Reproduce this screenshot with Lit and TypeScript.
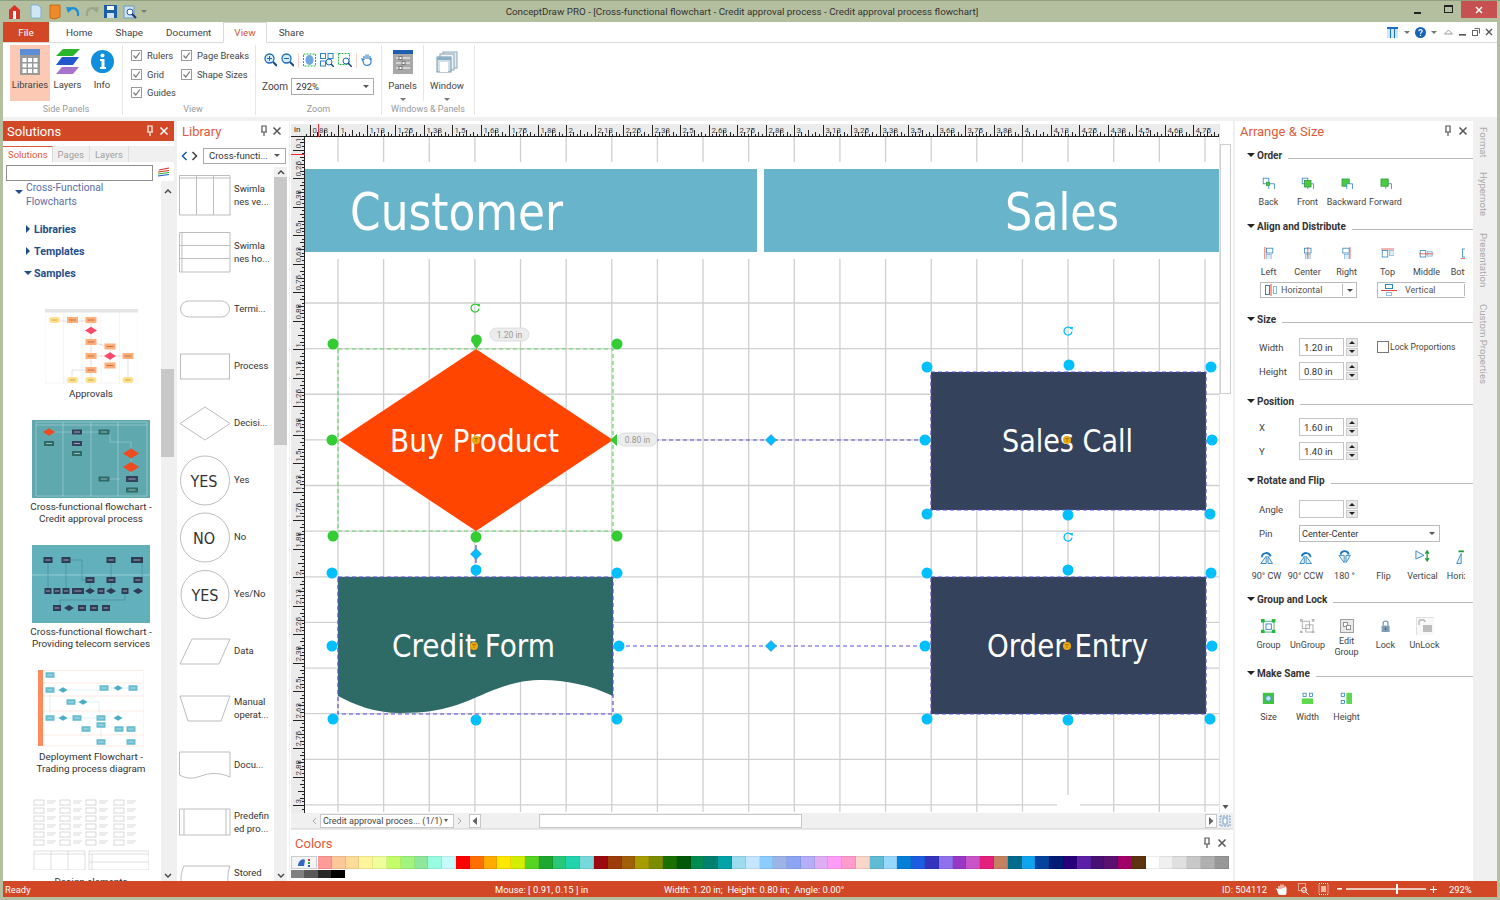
import { LitElement, html, css, svg } from 'lit';
import { customElement } from 'lit/decorators.js';

const ic = (w: number, h: number, body: unknown) =>
  html`<svg width=${w} height=${h} viewBox="0 0 ${w} ${h}">${body}</svg>`;
const gap = (n: number) => html`<span class="gap" style="width:${n}px"></span>`;

const BL = '#2f86c0';
const RD = '#e8453c';
const GR = '#4ccc3c';

const box = (x: number, y: number, w: number, h: number, fill = '#fff', stroke = BL) =>
  svg`<rect x=${x + 0.5} y=${y + 0.5} width=${w} height=${h} fill=${fill} stroke=${stroke}/>`;
const hl = (x1: number, y1: number, x2: number, y2: number, c = RD) =>
  svg`<line x1=${x1} y1=${y1} x2=${x2} y2=${y2} stroke=${c}/>`;

const ICONS: Record<string, unknown> = {
  back: svg`${box(1, 1, 7, 7)}${box(8, 8, 7, 7)}${box(5, 6, 4, 4, GR, '#2a9a40')}`,
  front: svg`${box(1, 1, 7, 7)}${box(8, 8, 7, 7)}${box(4, 4, 8, 8, GR, '#2a9a40')}`,
  backward: svg`${box(2, 2, 9, 9, GR, '#2a9a40')}${box(8, 8, 7, 7)}`,
  forward: svg`${box(8, 8, 7, 7)}${box(2, 2, 9, 9, GR, '#2a9a40')}`,
  left: svg`${box(5, 1, 8, 6)}${box(5, 9, 6, 6, '#dcecf6', '#8cbcd8')}${hl(3.5, 0, 3.5, 16)}`,
  center: svg`${box(4, 1, 8, 6)}${box(5, 9, 6, 6, '#dcecf6', '#8cbcd8')}${hl(8.5, 0, 8.5, 16)}`,
  right: svg`${box(3, 1, 8, 6)}${box(5, 9, 6, 6, '#dcecf6', '#8cbcd8')}${hl(12.5, 0, 12.5, 16)}`,
  top: svg`${box(1, 4, 7, 8)}${box(10, 4, 6, 6, '#dcecf6', '#8cbcd8')}${hl(0, 2.5, 17, 2.5)}`,
  middle: svg`${box(1, 4, 7, 8)}${box(10, 5, 6, 6, '#dcecf6', '#8cbcd8')}${hl(0, 8.5, 18, 8.5)}`,
  bot: svg`${box(4, 2, 8, 10)}${hl(2, 14.5, 14, 14.5)}`,
  cw: svg`<path d="M2 15 L8 7 L8 15 Z M10 7 L15 15 L10 15 Z" fill="#eaf4fb" stroke=${BL}/><path d="M3 8 C4 2 11 2 13 7" fill="none" stroke="#1878c8" stroke-width="2"/>`,
  ccw: svg`<path d="M2 15 L7 7 L7 15 Z M9 7 L15 15 L9 15 Z" fill="#eaf4fb" stroke=${BL}/><path d="M14 8 C13 2 6 2 4 7" fill="none" stroke="#1878c8" stroke-width="2"/>`,
  r180: svg`<path d="M2 6 L8 14 L8 6 Z M10 14 L15 6 L10 6 Z" fill="#eaf4fb" stroke=${BL}/><path d="M4 5 C5 0 12 0 13 5" fill="none" stroke="#1878c8" stroke-width="2"/>`,
  vert: svg`<path d="M1 1 L10 6 L1 10 Z" fill="#eaf4fb" stroke=${BL}/><path d="M13.5 2 V11 M11.5 4 L13.5 1 L15.5 4 M11.5 9 L13.5 12 L15.5 9" fill="none" stroke="#1f9a3a" stroke-width="1.4"/>`,
  horiz: svg`<path d="M8 4 L3 15 L8 15 Z" fill="#eaf4fb" stroke=${BL}/><path d="M5 1.5 H11" stroke="#1f9a3a" stroke-width="2"/>`,
  group: svg`${box(2, 2, 12, 12, 'none', '#4aa07a')}${box(5, 5, 6, 6)}<path d="M0 0h4v4h-4z M12 0h4v4h-4z M0 12h4v4h-4z M12 12h4v4h-4z" fill="#22b83c"/>`,
  ungroup: svg`${box(2, 2, 8, 8, 'none', '#a8a8a8')}${box(6, 6, 8, 8, 'none', '#a8a8a8')}<path d="M0 0h3v3h-3z M13 0h3v3h-3z M0 13h3v3h-3z M13 13h3v3h-3z" fill="#b8b8b8"/>`,
  editgroup: svg`${box(0, 0, 13, 13, '#e8e8e8', '#a0a0a0')}${box(3, 3, 4, 4, '#fff', '#909090')}${box(6, 6, 4, 4, '#fff', '#909090')}`,
  lock: svg`<path d="M4 7 V4 C4 0.5 10 0.5 10 4 V7" fill="none" stroke="#7c9cb0" stroke-width="1.6"/><rect x="2" y="7" width="10" height="8" fill="#7d9db4"/><rect x="6.3" y="9.5" width="1.4" height="3" fill="#3d5a70"/>`,
  unlock: svg`${box(0, 0, 18, 18, '#f8f8f8', '#e0e0e0')}<path d="M3 8 V5 C3 2 9 2 9 5" fill="none" stroke="#bbb" stroke-width="1.4"/><rect x="7" y="8" width="9" height="7" fill="#bdbdbd"/>`,
  msize: svg`<rect x="1" y="1" width="14" height="14" fill="#3ec43e"/><circle cx="8" cy="8" r="3.5" fill="#b8e4f8" stroke="#2f86c0"/>`,
  mwidth: svg`<rect x="1" y="8" width="14" height="7" fill="#5ed84e"/>${box(2, 1, 4, 4, '#fff')}${box(10, 1, 4, 4, '#fff')}`,
  mheight: svg`<rect x="8" y="1" width="7" height="14" fill="#5ed84e"/>${box(1, 1, 4, 4, '#fff')}${box(1, 10, 4, 4, '#fff')}`
};

const tool = (name: string, label: string, w = 16, h = 16, scale = 0.8, cls = '') =>
  html`<div class="tool ${cls}">
    <div class="tool-ic">
      ${name ? html`<svg width=${w * scale} height=${h * scale} viewBox="0 0 ${w} ${h}">${ICONS[name]}</svg>` : ''}
    </div>
    <div class="tool-lb">${label}</div>
  </div>`;

const tri = html`<span class="tri"></span>`;

const pin = (c: string) =>
  ic(12, 12, svg`<path d="M4 1 H8 V7 H4 Z M3 7 H9 M6 7 V11" fill="none" stroke=${c} stroke-width="1.2"/>`);
const close = (c: string) =>
  ic(12, 12, svg`<path d="M2.5 2.5 L9.5 9.5 M9.5 2.5 L2.5 9.5" stroke=${c} stroke-width="1.5"/>`);

const spin = html`<div class="spin"><span class="up"></span><span class="dn"></span></div>`;
const numRow = (label: string, val: string) =>
  html`<div class="num"><label>${label}</label><div class="inp">${val}</div>${spin}</div>`;

const sb = (top: number, len: number) =>
  html`<div class="sbar">
    ${ic(12, 10, svg`<path d="M3 7 L6 4 L9 7" fill="none" stroke="#444" stroke-width="1.4"/>`)}
    <div class="track"><div class="thumb" style="margin-top:${top}px;height:${len}px"></div></div>
    ${ic(12, 10, svg`<path d="M3 3 L6 6 L9 3" fill="none" stroke="#444" stroke-width="1.4"/>`)}
  </div>`;

// sample thumbnails use page coordinates through their viewBox
const bx = (x: number, y: number, w: number, h: number, f: string, t = 'rgba(255,255,255,.75)') =>
  svg`<rect x=${x - w / 2} y=${y - h / 2} width=${w} height=${h} fill=${f}/>
  <path d="M${x - w * 0.3} ${y} H${x + w * 0.3}" stroke=${t} stroke-width="0.7"/>`;
const dm = (x: number, y: number, r: number, f: string) =>
  svg`<path d="M${x - r} ${y} L${x} ${y - r * 0.62} L${x + r} ${y} L${x} ${y + r * 0.62} Z" fill=${f}/>`;
const ol = (x: number, y: number, w: number, h: number, f: string) =>
  svg`<rect x=${x - w / 2} y=${y - h / 2} width=${w} height=${h} rx=${h / 2} fill=${f}/>
  <path d="M${x - w * 0.25} ${y} H${x + w * 0.25}" stroke="#a08030" stroke-width="0.6"/>`;
const ln = (d: string, c: string) => svg`<path d=${d} fill="none" stroke=${c} stroke-width="0.5"/>`;
const ORT = '#a05a30';

const approvals = svg`
  <rect x="45" y="309" width="93" height="3.5" fill="#e4e4e4"/>
  ${[45, 63.5, 82, 101, 119.5, 138].map((x) => ln(`M${x} 309 V383`, '#e8e8e8'))}
  ${ln('M45 383 H138', '#e8e8e8')}
  ${ln('M57 321 H91 V380 M91 342 L110 347 M110 350 V365 M91 356 H128 V380 M91 370 H72 V380', '#c0c0c0')}
  ${ol(54.5, 320, 11, 6, '#ffe08c')}${bx(72.5, 320, 11, 6, '#ffae78', ORT)}${bx(91, 320, 11, 6, '#ffae78', ORT)}
  ${dm(91, 330.5, 6, '#fa4a6c')}${bx(91, 342, 11, 6, '#ffae78', ORT)}${bx(110, 346.5, 11, 6, '#ffae78', ORT)}
  ${bx(91, 356, 11, 6, '#ffae78', ORT)}${dm(110, 356, 6, '#fa4a6c')}${bx(110, 365.5, 11, 6, '#ffae78', ORT)}
  ${bx(128, 356, 11, 6, '#ffae78', ORT)}${bx(91, 370, 11, 6, '#ffae78', ORT)}
  ${ol(72.5, 380, 11, 6, '#ffe08c')}${ol(91, 380, 11, 6, '#ffe08c')}${ol(128, 380, 11, 6, '#ffe08c')}
`;

const credit = svg`
  <rect x="32" y="420" width="118" height="78" fill="#5fa8ae"/>
  ${ln('M36 422 H147 V496 H36 Z M36 425 H147 M63 422 V496 M91 422 V496 M118 422 V496', '#bfe0e0')}
  ${ln('M55 432 H72 M82 432 H100 M110 432 V442 H131 V448 M131 458 V474 M120 479 H110', '#a8d4d6')}
  ${dm(49, 432, 6, '#f04a20')}${bx(49, 443.5, 10, 5, '#2e6b66')}
  ${bx(77, 432, 10, 5, '#34425c')}${bx(77, 443.5, 10, 5, '#34425c')}${bx(77, 453.5, 10, 5, '#2e6b66')}
  ${bx(104, 432, 11, 5, '#2e6b66')}${dm(131, 453.5, 8, '#f04a20')}${dm(131, 467, 8, '#f04a20')}
  ${bx(104, 479, 11, 5, '#2e6b66')}${bx(132, 479, 12, 6, '#34425c')}${bx(132, 490, 12, 5, '#2e6b66')}
`;

const telecom = svg`
  <rect x="32" y="545" width="118" height="78" fill="#62b0bb"/>
  ${ln('M32 575 H150', '#c8e8ec')}
  ${ln('M48 563 V591 M66 563 V591 M71 560 H82 V580 H90 M111 563 V591 M142 562 V580 M90 582 V591 M125 591 V600 H60 V608', '#3d7f90')}
  ${[48, 66, 111, 137].map((x) => bx(x, 560, x === 137 ? 12 : 9, 6, '#2f3c56'))}
  ${[90, 111, 138].map((x) => bx(x, 580, 9, 6, '#2f3c56'))}
  ${[48, 57, 66, 78, 101, 125].map((x) => bx(x, 591, x === 78 ? 12 : 7, 6, '#2f3c56'))}
  ${[90, 111, 138].map((x) => dm(x, 591, 5, '#2f3c56'))}
  ${[57, 82, 94, 106].map((x) => bx(x, 608, 8, 6, '#2f3c56'))}${dm(69, 608, 5, '#2f3c56')}
`;

const deployment = svg`
  <rect x="38" y="669" width="106" height="78" fill="#fff"/>
  <rect x="38" y="669" width="5" height="76" fill="#ff8a5c"/>
  ${ln('M43 669.5 H144 V745 H43 M43 682 H144 M43 695 H144 M43 710 H144 M43 734 H144', '#fbd4c4')}
  ${ln('M55 689 H99 M108 687 H128 M50 693 V714 M55 717 H97 M75 701 H99 V712 M101 727 V738', '#bfe0ea')}
  ${[[50, 674], [50, 689], [104, 687], [133, 687], [71, 701], [50, 717], [77, 717], [101, 717], [101, 724], [86, 728], [119, 728], [131, 728], [101, 741], [131, 741]].map(
    ([x, y]) => bx(x, y, 9, 5.5, '#66bcd0')
  )}
  ${[[63, 689], [118, 687], [83, 701], [63, 717], [118, 717]].map(([x, y]) => dm(x, y, 4.5, '#4caec4'))}
`;

const designEls = svg`
  ${[800, 808, 816, 824, 832, 840].map((y) =>
    [34, 60, 86, 114].map(
      (x) => svg`<rect x=${x} y=${y - 2} width="10" height="5" fill="none" stroke="#bdbdbd" stroke-width="0.6"/>
      ${ln(`M${x + 13} ${y - 1} H${x + 22} M${x + 13} ${y + 1} H${x + 20}`, '#b0b0b0')}`
    )
  )}
  ${ln('M34 849 H85 V868 H34 Z M34 852 H85 M51 849 V868 M68 849 V868', '#bdbdbd')}
  ${ln('M89 849 H149 V868 H89 Z M89 852 H149 M92 852 V868 M89 860 H149', '#bdbdbd')}
`;

const samples = [
  { vb: '45 309 93 75', w: 93, h: 75, body: approvals, label: ['Approvals'] },
  { vb: '32 420 118 78', w: 118, h: 78, body: credit, label: ['Cross-functional flowchart -', 'Credit approval process'] },
  { vb: '32 545 118 78', w: 118, h: 78, body: telecom, label: ['Cross-functional flowchart -', 'Providing telecom services'] },
  { vb: '38 669 106 78', w: 106, h: 78, body: deployment, label: ['Deployment Flowchart -', 'Trading process diagram'] },
  { vb: '33 797 116 71', w: 116, h: 71, body: designEls, label: ['Design elements'] }
];

const libShape = (d: string) => svg`<path d=${d} fill="#fff" stroke="#bdbdbd" stroke-width="1"/>`;
const lib: { lb: string[]; s: unknown }[] = [
  { lb: ['Swimla', 'nes ve...'], s: svg`${libShape('M0.5 5.5 H51 V45 H0.5 Z M0.5 8 H51 M17.5 5.5 V45 M34.5 5.5 V45')}` },
  { lb: ['Swimla', 'nes ho...'], s: svg`${libShape('M0.5 5.5 H51 V45 H0.5 Z M3 5.5 V45 M0.5 18.5 H51 M0.5 31.5 H51')}` },
  { lb: ['Termi...'], s: svg`<rect x="1.5" y="17" width="49" height="16" rx="8" fill="#fff" stroke="#bdbdbd"/>` },
  { lb: ['Process'], s: svg`<rect x="1.5" y="13" width="49" height="25" fill="#fff" stroke="#bdbdbd"/>` },
  { lb: ['Decisi...'], s: libShape('M1 25.5 L26 9 L51 25.5 L26 42 Z') },
  { lb: ['Yes'], s: svg`<circle cx="26" cy="25.5" r="24.5" fill="#fff" stroke="#bdbdbd"/><text x="25" y="32" class="ct">YES</text>` },
  { lb: ['No'], s: svg`<circle cx="26" cy="25.5" r="24.5" fill="#fff" stroke="#bdbdbd"/><text x="25" y="32" class="ct">NO</text>` },
  { lb: ['Yes/No'], s: svg`<circle cx="26" cy="25.5" r="24" fill="#fff" stroke="#bdbdbd"/><text x="26" y="32" class="ct">YES</text>` },
  { lb: ['Data'], s: libShape('M1 38 L13 13 H51 L40 38 Z') },
  { lb: ['Manual', 'operat...'], s: libShape('M1 13 H51 L42 38 H9 Z') },
  { lb: ['Docu...'], s: libShape('M0.5 12 H51 V37 C40 32 30 33 22 36 C14 39 8 39 0.5 35 Z') },
  { lb: ['Predefin', 'ed pro...'], s: libShape('M0.5 12 H51 V38 H0.5 Z M5 12 V38 M47 12 V38') },
  { lb: ['Stored'], s: libShape('M5 12 H51 C48 20 48 30 51 38 H5 C1 30 1 20 5 12 Z') }
];

const colors = ['#fe9a9a', '#fdc79a', '#fddc9a', '#fef59a', '#eefe9a', '#c3fd6a', '#a0f57e', '#8ee89c', '#98fce0', '#c7fbfb', '#ff0000', '#ff7000', '#ffab00', '#ffe800', '#d4ee00', '#55d420', '#1ea830', '#28c878', '#22d4ac', '#78d8dc', '#9c0a10', '#9c3c08', '#a06008', '#a89c00', '#7c8c00', '#1a7000', '#005808', '#008c50', '#00806e', '#00a4a8', '#9cdcee', '#c4e6fe', '#8cccfe', '#9cb4e8', '#8ca4f4', '#b4aef8', '#e0acf4', '#ff9cf8', '#ff9ccc', '#fad6c8', '#60bcd4', '#96d8fe', '#0480d8', '#1c5ce0', '#3434bc', '#9070ec', '#9838c4', '#c854c8', '#e4207c', '#c48060', '#006c8c', '#10a4f0', '#0444a0', '#001c74', '#28007c', '#5c20a8', '#481074', '#5c1070', '#a00068', '#5c3410', '#ffffff', '#f0f0f0', '#e0e0e0', '#c8c8c8', '#b0b0b0', '#989898'];

const fmt = (v: number) => String(Math.round(v * 100) / 100);

function topRuler() {
  const out: unknown[] = [];
  for (let i = -9; i * 3.5625 + 338 < 1219; i++) {
    const x = Math.round(338 + i * 3.5625) + 0.5;
    const h = i % 8 === 0 ? 12 : i % 4 === 0 ? 7 : i % 2 === 0 ? 5 : 3;
    out.push(svg`<line x1=${x} x2=${x} y1=${137} y2=${137 - h} stroke="#222"/>`);
    if (i % 8 === 0) out.push(svg`<text x=${x + 2} y="132.5" class="rt">${fmt(1 + i / 64)}</text>`);
  }
  return out;
}
function leftRuler() {
  const out: unknown[] = [];
  for (let i = 5; i * 3.5625 + 121 < 812; i++) {
    const y = Math.round(121 + i * 3.5625) + 0.5;
    const h = i % 8 === 0 ? 12 : i % 4 === 0 ? 7 : i % 2 === 0 ? 5 : 3;
    out.push(svg`<line y1=${y} y2=${y} x1=${305} x2=${305 - h} stroke="#222"/>`);
    if (i % 8 === 0) out.push(svg`<text transform="translate(300.5 ${y - 2}) rotate(-90)" class="rt">${fmt(i / 64)}</text>`);
  }
  return out;
}

const dot = (x: number, y: number, f: string) => svg`<circle cx=${x} cy=${y} r="5.5" fill=${f}/>`;
const conn = (x: number, y: number) =>
  svg`<path d="M${x} ${y - 5.5} L${x + 5.5} ${y} L${x} ${y + 5.5} L${x - 5.5} ${y} Z" fill="#00bfff" stroke="#4a6ab0" stroke-width="0.5"/>`;
const tmark = (x: number, y: number) =>
  svg`<circle cx=${x} cy=${y} r="4" fill="#eaa80c"/><path d="M${x - 1.8} ${y - 1.5} H${x + 1.8} M${x} ${y - 1.5} V${y + 2}" stroke="#a87000" stroke-width="0.8"/>`;
const rot = (x: number, y: number, c: string) =>
  svg`<path d="M${x + 3.2} ${y - 2.4} A4 4 0 1 0 ${x + 4} ${y + 0.5}" fill="none" stroke=${c} stroke-width="1.3"/><path d="M${x + 1.6} ${y - 4} L${x + 5} ${y - 4} L${x + 4.4} ${y - 0.8} Z" fill=${c}/>`;
const cy = '#00bfff';
const gn = '#33cc33';

function diagram() {
  const vs: number[] = [];
  for (let k = 0; k < 20; k++) vs.push(338 + k * 45.63);
  const hs: number[] = [];
  for (let k = -1; k < 12; k++) hs.push(303 + k * 45.63);
  return svg`
    <g stroke="#d0d0d0" stroke-width="1.3">
      ${vs.map((x) => svg`<line x1=${x} x2=${x} y1="137" y2="812"/>`)}
      ${hs.map((y) => svg`<line x1="305" x2="1219" y1=${y} y2=${y}/>`)}
    </g>
    <rect x="305" y="162" width="914" height="97" fill="#fff"/>
    <rect x="1057" y="795" width="23" height="17" fill="#fff"/>
    <rect x="305" y="169" width="452" height="83" fill="#68b5cb"/>
    <rect x="764" y="169" width="455" height="83" fill="#68b5cb"/>
    <text x="350" y="230" class="big" textLength="213" lengthAdjust="spacingAndGlyphs">Customer</text>
    <text x="1005" y="230" class="big" textLength="114" lengthAdjust="spacingAndGlyphs">Sales</text>

    <path d="M476 349 L613 440 L476 531 L339 440 Z" fill="#ff4500"/>
    <text x="390" y="452" class="mid" textLength="169" lengthAdjust="spacingAndGlyphs">Buy Product</text>
    <path d="M338 577 H613 V696 C590 685 565 680 543 680 C510 680 490 692 465 702 C445 710 425 713 400 713 C375 713 355 705 338 696 Z" fill="#2e6b66"/>
    <text x="392" y="657" class="mid" textLength="163" lengthAdjust="spacingAndGlyphs">Credit Form</text>
    <rect x="931" y="372" width="275" height="138" fill="#34425c"/>
    <text x="1002" y="452" class="mid" textLength="131" lengthAdjust="spacingAndGlyphs">Sales Call</text>
    <rect x="931" y="577" width="275" height="137" fill="#34425c"/>
    <text x="987" y="657" class="mid" textLength="161" lengthAdjust="spacingAndGlyphs">Order Entry</text>

    <rect x="338" y="349" width="275" height="182" fill="none" stroke="#66d966" stroke-width="1.2" stroke-dasharray="4 3"/>
    <g fill="none" stroke="#5a50d8" stroke-width="1.2" stroke-dasharray="4 3">
      <rect x="338" y="577" width="275" height="137"/>
      <rect x="931" y="372" width="275" height="138"/>
      <rect x="931" y="577" width="275" height="137"/>
      <path d="M476 531 V577 M613 440 H925 M619 646 H925"/>
    </g>
    ${[[333, 344], [617, 344], [332, 440], [333, 536], [476, 537], [617, 536]].map(([x, y]) => dot(x, y, gn))}
    <path d="M471 341 A5.5 5.5 0 1 1 481.5 342 L476.5 349 Z" fill=${gn}/>
    <path d="M610 440 L617 434 V446 Z" fill=${gn}/>
    ${rot(475, 308, gn)}
    ${[[332, 573], [476, 570], [617, 573], [332, 646], [619, 646], [333, 719], [476, 720], [617, 719]].map(([x, y]) => dot(x, y, cy))}
    ${[[927, 367], [1069, 365], [1211, 367], [925, 440], [1212, 440], [927, 514], [1068, 515], [1210, 514]].map(([x, y]) => dot(x, y, cy))}
    ${[[927, 573], [1068, 570], [1211, 573], [925, 646], [1212, 646], [927, 719], [1068, 720], [1210, 719]].map(([x, y]) => dot(x, y, cy))}
    ${conn(476, 554)}${conn(771, 440)}${conn(771, 646)}
    ${rot(1068, 331, cy)}${rot(1068, 537, cy)}
    ${tmark(476, 440)}${tmark(1067, 440)}${tmark(474, 646)}${tmark(1067, 646)}
    <rect x="490" y="328" width="39" height="13" rx="6.5" fill="#ececec" stroke="#dedede"/>
    <text x="509.5" y="337.5" class="pill">1.20 in</text>
    <rect x="618" y="433" width="39" height="13" rx="6.5" fill="#ececec" stroke="#dedede"/>
    <text x="637.5" y="442.5" class="pill">0.80 in</text>
  `;
}

@customElement('app-root')
export class AppRoot extends LitElement {
  static styles = css`
    :host {
      display: block;
      width: 1500px;
      height: 900px;
      overflow: hidden;
      background: #b3bf9f;
      font-family: Roboto, 'Liberation Sans', sans-serif;
      font-size: 9.5px;
      color: #444;
    }
    svg { display: block; flex: none; }
    .gap { flex: none; }

    /* title bar */
    .titlebar {
      height: 22px;
      box-sizing: border-box;
      border-top: 1px solid #8f9f80;
      display: flex;
      align-items: center;
    }
    .qat { display: flex; align-items: center; padding-left: 8px; width: 500px; box-sizing: border-box; }
    .title { width: 484px; text-align: center; color: #333; white-space: nowrap; font-size: 9.8px; }
    .winctl { margin-left: auto; display: flex; align-items: center; gap: 8px; height: 17px; margin-top: -4px; margin-right: 3px; }
    .winx { width: 36px; height: 17px; background: #c75050; display: flex; align-items: center; justify-content: center; }
    .caret-lt { border-top-color: #f4f4f4; }

    .app { margin: 0 3px; width: 1494px; height: 859px; background: #fff; display: flex; flex-direction: column; }

    /* ribbon */
    .tabs { height: 21px; display: flex; align-items: stretch; border-bottom: 1px solid #d9d9d9; box-sizing: border-box; font-size: 9.9px; }
    .file { width: 46px; background: #d24726; color: #fff; display: flex; align-items: center; justify-content: center; margin-right: 5.5px; }
    .tab { padding: 0 11.5px; display: flex; align-items: center; color: #444; }
    .tab.on { color: #d9553a; border: 1px solid #d9d9d9; border-bottom: 1px solid #fff; height: 21px; box-sizing: border-box; padding: 0 10.5px; }
    .tabs-r { margin-left: auto; display: flex; align-items: center; padding-right: 4px; }
    .caret { width: 0; height: 0; flex: none; border-left: 3px solid transparent; border-right: 3px solid transparent; border-top: 3px solid #777; }

    .ribbon { height: 74px; display: flex; padding-top: 2px; box-sizing: border-box; border-bottom: 1px solid #fff; }
    .grp { display: flex; flex-direction: column; border-right: 1px solid #e6e6e6; box-sizing: border-box; height: 70px; }
    .grp-body { height: 57px; display: flex; }
    .grp-lb { text-align: center; color: #999; font-size: 9px; line-height: 12px; margin-top: 1px; }
    .g-side { width: 120px; padding-left: 7px; }
    .g-view { width: 133px; padding-left: 8px; }
    .g-zoom { width: 126px; }
    .g-win { width: 93px; }
    .rbtn { display: flex; flex-direction: column; align-items: center; height: 56px; box-sizing: border-box; padding-top: 3px; }
    .rbtn.on { background: #fcc9b4; }
    .rbtn span { margin-top: 4px; }
    .w40 { width: 40px; }
    .w35 { width: 35px; }
    .w34 { width: 34px; }
    .w41 { width: 41px; }
    .w46 { width: 46px; }
    .checks { display: grid; grid-template-columns: 50px 70px; grid-auto-rows: 18.5px; padding-top: 1.5px; }
    .chk { display: flex; align-items: center; gap: 5px; white-space: nowrap; font-size: 9.4px; }
    .cb { width: 9px; height: 9px; border: 1px solid #9a9a9a; flex: none; }
    .zoom-col { display: flex; flex-direction: column; padding-left: 8px; width: 100%; }
    .zoom-ic { display: flex; align-items: center; height: 30px; gap: 4px; }
    .zoom-sep { width: 1px; height: 15px; background: #f4d6d0; flex: none; }
    .zoom-row { display: flex; align-items: center; gap: 3px; margin: 3px 0 0 -2px; }
    .zoom-lb { font-size: 10px; }
    .select { border: 1px solid #ababab; box-sizing: border-box; height: 17px; display: flex; align-items: center; padding: 0 4px; color: #333; }
    .select .caret { margin-left: auto; border-top-color: #555; }
    .zoom-sel { width: 83px; }
    .win-btn { display: flex; flex-direction: column; align-items: center; height: 56px; box-sizing: border-box; padding-top: 5px; }
    .win-btn.tall { padding-top: 6px; }
    .win-btn span { margin-top: 6px; }
    .win-btn.tall span { margin-top: 7px; }
    .win-btn .caret { margin-top: 7px; }
    .sep { width: 1px; height: 56px; background: #e6e6e6; }

    /* body */
    .body { flex: 1; min-height: 0; display: flex; background: #f0f0f0; padding-top: 4px; }
    .title-o { color: #e0583a; font-size: 13px; }
    .hdr { height: 20px; display: flex; align-items: center; padding: 0 5px 0 5px; gap: 1px; flex: none; }
    .hdr .sp { flex: 1; }

    .p-sol { width: 171px; background: #fff; display: flex; flex-direction: column; margin-right: 3px; }
    .p-sol .hdr { background: #d24726; color: #fff; font-size: 13px; padding: 0 4.5px 0 4px; gap: 1.5px; }
    .sol-tabs { margin-top: 5px; height: 16px; background: #f0f0f0; display: flex; color: #a0a0a0; align-items: stretch; flex: none; }
    .sol-tabs div { padding: 0 5px; display: flex; align-items: center; border-right: 1px solid #ddd; }
    .sol-tabs .on { color: #e0583a; background: #fff; border-top: 1px solid #e0583a; border-right: 1px solid #d9d9d9; padding: 0 4px 0 5px; }
    .sol-search { display: flex; align-items: center; height: 21px; padding-left: 3px; gap: 4px; flex: none; background: #fff; }
    .sol-input { width: 147px; height: 16px; box-sizing: border-box; border: 1px solid #8f8f8f; }
    .sol-main { flex: 1; min-height: 0; display: flex; margin-top: -2px; }
    .tree { width: 158px; overflow: hidden; }
    .root { display: flex; padding: 0 0 0 12px; gap: 3px; color: #5a6ea8; font-size: 10.3px; line-height: 14px; height: 37px; }
    .root .arr { margin-top: 9px; }
    .arr { width: 0; height: 0; flex: none; }
    .arr.d { border-left: 4px solid transparent; border-right: 4px solid transparent; border-top: 4px solid #1f4e8c; }
    .arr.r { border-top: 4px solid transparent; border-bottom: 4px solid transparent; border-left: 4px solid #1f4e8c; }
    .node { height: 22px; display: flex; align-items: center; gap: 4px; color: #1f4e8c; font-weight: 700; font-size: 10.7px; padding-left: 23px; }
    .node.open { padding-left: 21px; gap: 2px; }
    .samples { display: flex; flex-direction: column; gap: 20px; padding-top: 23px; }
    .sample { text-align: center; width: 158px; padding-left: 18px; box-sizing: border-box; flex: none; }
    .thumb-box { height: 78px; display: flex; align-items: center; justify-content: center; }
    .sample-lb { padding-top: 3px; line-height: 12px; color: #333; white-space: nowrap; font-size: 9.9px; }

    .sbar { width: 13px; background: #f0f0f0; display: flex; flex-direction: column; align-items: center; flex: none; padding-top: 5px; box-sizing: border-box; }
    .track { flex: 1; width: 100%; overflow: hidden; }
    .thumb { background: #c8c8c8; width: 100%; }

    .p-lib { width: 112px; background: #fff; display: flex; flex-direction: column; margin-right: 1px; }
    .p-lib .hdr { padding-right: 6px; }
    .lib-nav { display: flex; align-items: center; height: 17px; margin-top: 6px; padding-left: 3px; gap: 1px; flex: none; }
    .lib-sel { width: 83px; height: 16px; font-size: 9.5px; padding: 0 5px; margin-left: 3px; }
    .lib-main { flex: 1; min-height: 0; display: flex; margin-top: 3px; }
    .lib-list { width: 98px; overflow: hidden; }
    .lib-item { height: 57px; display: flex; align-items: center; gap: 3px; padding-left: 2px; color: #333; line-height: 12.5px; white-space: nowrap; }
    .lib-item:last-child > div { transform: translateY(-6px); }
    .ct { font-size: 16px; fill: #333; text-anchor: middle; font-family: 'DejaVu Sans', sans-serif; font-stretch: condensed; }
    .p-lib .sbar { padding-top: 0; margin-right: 2px; }

    /* centre */
    .center { width: 943px; background: #fff; display: flex; flex-direction: column; margin-right: 2px; padding-left: 1px; box-sizing: border-box; }
    .work { height: 692px; flex: none; padding-top: 3px; box-sizing: border-box; display: grid; grid-template-columns: 14px 914px 12px; grid-template-rows: 13px 676px; }
    .corner { background: #ebebeb; border-bottom: 1px solid #222; box-sizing: border-box; font-size: 8px; color: #222; padding-left: 3px; line-height: 12px; }
    .ruler { background: #ebebeb; }
    .rt { font-size: 8px; fill: #444; }
    .big { font-size: 52px; fill: #fff; font-family: 'DejaVu Sans', sans-serif; font-stretch: condensed; }
    .mid { font-size: 32px; fill: #fff; font-family: 'DejaVu Sans', sans-serif; font-stretch: condensed; }
    .pill { font-size: 8.5px; fill: #999; text-anchor: middle; }
    .vscroll { display: flex; flex-direction: column; background: #fff; grid-column: 3; grid-row: 1 / 3; border-left: 1px solid #e4e4e4; align-items: center; box-sizing: border-box; }
    .vscroll .vt { flex: 1; width: 100%; padding-top: 20px; box-sizing: border-box; }
    .vscroll .vth { height: 250px; background: #fff; border: 1px solid #cfcfcf; box-sizing: border-box; }
    .hbar { height: 16px; background: #f0f0f0; display: flex; align-items: center; padding-left: 20px; border-bottom: 1px solid #e0e0e0; flex: none; color: #aaa; gap: 2px; box-sizing: border-box; }
    .pg-sel { width: 134px; flex: none; height: 14px; background: #fff; border: 1px solid #c8c8c8; box-sizing: border-box; font-size: 9px; color: #444; padding: 0 2px; display: flex; align-items: center; white-space: nowrap; justify-content: space-between; }
    .pg-sel .caret { border-top-color: #555; border-left-width: 2px; border-right-width: 2px; margin-right: 3px; }
    .pg-btn { width: 12px; flex: none; height: 14px; border: 1px solid #c8c8c8; box-sizing: border-box; background: #fff; display: flex; align-items: center; justify-content: center; }
    .hthumb { width: 263px; flex: none; height: 14px; background: #fff; border: 1px solid #c8c8c8; box-sizing: border-box; margin-left: 56px; }
    .colors { flex: 1; min-height: 0; display: flex; flex-direction: column; border-top: 1px solid #e8e8e8; }
    .colors .hdr { height: 26px; padding: 0 5px 0 4px; }
    .pal { display: flex; height: 13px; flex: none; }
    .pal-ic { width: 26px; border: 1px solid #ccc; box-sizing: border-box; margin-right: 1px; height: 13px; display: flex; align-items: center; justify-content: center; background: #f4f4f4; }
    .sw { width: 13.8px; height: 13px; box-sizing: border-box; border: 1px solid rgba(0, 0, 0, 0.08); border-left-width: 0; }
    .pal2 { display: flex; margin-top: 1px; height: 8px; }
    .pal2 div { width: 13.4px; }

    /* right */
    .p-arr { width: 238px; background: #fff; flex: none; }
    .arr-in { width: 238px; overflow: hidden; }
    .arr-hd { height: 20px; display: flex; align-items: center; padding: 0 4px 0 5px; margin-bottom: 3px; }
    .arr-hd .sp { flex: 1; }
    .sec { overflow: hidden; }
    .sec-h { height: 22px; display: flex; align-items: center; padding-left: 12px; font-weight: 700; color: #333; white-space: nowrap; font-size: 10px; }
    .tri { width: 0; height: 0; border-left: 4px solid transparent; border-right: 4px solid transparent; border-top: 4px solid #222; margin-right: 2px; flex: none; }
    .sec-h i { flex: 1; height: 1px; background: #bbb; margin-left: 6px; margin-top: 6px; }
    .tools { display: flex; padding-left: 14px; width: 230px; box-sizing: border-box; overflow: hidden; }
    .tool { width: 39px; flex: none; display: flex; flex-direction: column; align-items: center; text-align: center; white-space: nowrap; }
    .tool-ic { height: 18px; display: flex; align-items: center; justify-content: center; }
    .tool-lb { line-height: 11px; font-size: 9px; margin-top: 5px; color: #444; }
    .tool.lb-shift .tool-lb { transform: translateX(6px); }
    .lb-tight { margin-top: 1px; }
    .s-order { height: 71px; }
    .s-order .tools { padding-top: 8px; }
    .s-align { height: 93px; }
    .s-align .tools { padding-top: 7px; }
    .drops { display: flex; padding: 4px 0 0 25px; gap: 20px; }
    .drop { height: 16px; border: 1px solid #bbb; box-sizing: border-box; display: flex; align-items: center; gap: 3px; color: #555; font-size: 9px; padding-left: 3px; }
    .drop.h { width: 97px; }
    .drop.v { width: 88px; border-right: none; }
    .drop .bar { margin-left: auto; width: 1px; height: 12px; background: #bbb; }
    .drop .caret { margin: 0 3px 0 1px; border-top-color: #444; }
    .s-size { height: 82px; }
    .s-size .sec-h { margin-bottom: 5px; }
    .s-pos { height: 79px; }
    .s-pos .sec-h { margin-bottom: 3px; }
    .s-rot { height: 119px; }
    .s-rot .sec-h { margin-bottom: 6px; }
    .s-rot .tools { padding: 3px 0 0 12px; }
    .s-grp { height: 74px; }
    .s-grp .tools { padding-top: 7px; }
    .s-make .tools { padding-top: 5px; }
    .num { display: flex; align-items: center; height: 24px; padding-left: 24px; color: #444; }
    .num label { width: 40px; }
    .inp { width: 45px; height: 18px; border: 1px solid #c4c4c4; box-sizing: border-box; padding-left: 4px; display: flex; align-items: center; color: #333; }
    .spin { margin-left: 2px; width: 12px; height: 18px; display: flex; flex-direction: column; gap: 1px; flex: none; }
    .spin span { flex: 1; background: #e8e8e8; border: 1px solid #ccc; box-sizing: border-box; display: flex; align-items: center; justify-content: center; }
    .spin span::after { content: ''; width: 0; height: 0; border-left: 3px solid transparent; border-right: 3px solid transparent; }
    .spin .up::after { border-bottom: 3px solid #222; }
    .spin .dn::after { border-top: 3px solid #222; }
    .lock { display: flex; align-items: center; margin-left: 19px; font-size: 8.6px; white-space: nowrap; }
    .lock .cb { width: 10px; height: 10px; border-color: #777; margin-right: 1px; }
    .pinrow { display: flex; align-items: center; height: 24px; padding-left: 24px; }
    .pinrow label { width: 40px; }
    .pinsel { width: 141px; height: 17px; font-size: 9.2px; padding-left: 2px; border-color: #bbb; }
    .tabs-v { width: 24px; flex: none; display: flex; flex-direction: column; color: #aaa; background: #f0f0f0; font-size: 9.6px; }
    .tabs-v div { writing-mode: vertical-rl; white-space: nowrap; padding-top: 1px; width: 17px; line-height: 14px; box-sizing: border-box; flex: none; }
    .tabs-v .t1 { height: 50px; padding-top: 6px; }
    .tabs-v .t2 { height: 61px; }
    .tabs-v .t3 { height: 71px; }

    /* status */
    .status { height: 16px; margin: 0 3px; width: 1494px; background: #d24726; color: #fff; display: flex; align-items: center; font-size: 9.4px; white-space: nowrap; padding-left: 2px; box-sizing: border-box; }
    .st-ready { width: 20px; }
    .st-mouse { margin-left: 470px; width: 169px; }
    .st-size { width: 558px; }
    .st-id { width: 54px; }
    .st-r { display: flex; align-items: center; gap: 4px; }
    .st-pct { margin-left: 8px; }
    .slider { width: 80px; height: 2px; background: #eec8bc; position: relative; }
    .slider i { position: absolute; left: 50px; top: -4px; width: 2px; height: 10px; background: #fff; }
  `;

  render() {
    return html`
      <div class="titlebar">
        <div class="qat">
          ${ic(13, 16, svg`<path d="M1 15 V6 L6.5 1 L12 6 V15 Z" fill="#d8342a"/><path d="M5 15 V7 H8 V15 Z" fill="#fff"/>`)}
          ${gap(9)}
          ${ic(12, 15, svg`<path d="M1 1 H8 L11 4 V14 H1 Z" fill="#cfe6f5" stroke="#7fb0d0"/>`)}
          ${gap(7)}
          ${ic(12, 16, svg`<path d="M1 1 H11 V13 L6 15 L1 14 Z" fill="#ee8a2a" stroke="#c86a14"/>`)}
          ${gap(5)}
          ${ic(14, 13, svg`<path d="M3 6 C6 1 13 3 12 11" fill="none" stroke="#1b8fd8" stroke-width="2.2"/><path d="M0 2 L6 2.5 L2 8 Z" fill="#1b8fd8"/>`)}
          ${gap(5)}
          ${ic(14, 13, svg`<path d="M11 6 C8 1 1 3 2 11" fill="none" stroke="#9aa68a" stroke-width="2.2"/><path d="M14 2 L8 2.5 L12 8 Z" fill="#9aa68a"/>`)}
          ${gap(4.5)}
          ${ic(13, 13, svg`<rect width="13" height="13" fill="#1a5ea8"/><rect x="3" y="1" width="7" height="4" fill="#fff"/><rect x="3" y="8" width="7" height="5" fill="#cfe0f0"/>`)}
          ${gap(6.5)}
          ${ic(14, 14, svg`<rect x="1" y="1" width="10" height="12" fill="#cfe0ee" stroke="#6f9cc0"/><circle cx="7" cy="7" r="3" fill="#fff" stroke="#1a5ea8"/><path d="M9 9 L13 13" stroke="#1a3a68" stroke-width="2"/>`)}
          ${gap(4)}
          <div class="caret caret-lt"></div>
        </div>
        <div class="title">ConceptDraw PRO - [Cross-functional flowchart - Credit approval process - Credit approval process flowchart]</div>
        <div class="winctl">
          ${ic(8, 8, svg`<rect y="6" width="7" height="2" fill="#222"/>`)}
          ${gap(6)}
          ${ic(9, 9, svg`<rect x="0.5" y="0.5" width="8" height="7" fill="none" stroke="#222"/><rect y="0" width="9" height="2" fill="#222"/>`)}
          <div class="winx">${ic(8, 8, svg`<path d="M1 1 L7 7 M7 1 L1 7" stroke="#fff" stroke-width="1.5"/>`)}</div>
        </div>
      </div>

      <div class="app">
        <div class="tabs">
          <div class="file">File</div>
          <div class="tab">Home</div>
          <div class="tab">Shape</div>
          <div class="tab">Document</div>
          <div class="tab on">View</div>
          <div class="tab">Share</div>
          <div class="tabs-r">
            ${ic(11, 11, svg`<rect width="11" height="11" fill="#cfe6f5"/><rect width="11" height="2" fill="#1c6ec0"/><path d="M3.5 2 V11 M7.5 2 V11" stroke="#1c6ec0"/>`)}
            ${gap(6.5)}<div class="caret"></div>${gap(4.5)}
            ${ic(11, 11, svg`<circle cx="5.5" cy="5.5" r="5.5" fill="#1565b8"/><path d="M3.8 4.2 C4 2 7.4 2.3 7.2 4.2 C7 5.4 5.5 5.4 5.5 6.8 M5.5 7.8 V9" fill="none" stroke="#fff" stroke-width="1.2"/>`)}
            ${gap(5.5)}<div class="caret"></div>${gap(6.5)}
            ${ic(9, 6, svg`<path d="M0.5 5 L4.5 1 L8.5 5 Z" fill="none" stroke="#999"/>`)}
            ${gap(6.5)}
            ${ic(8, 8, svg`<rect y="6" width="7" height="1.6" fill="#555"/>`)}
            ${gap(5)}
            ${ic(8, 8, svg`<rect x="0.5" y="2.5" width="5" height="5" fill="none" stroke="#666"/><path d="M2.5 0.5 H7.5 V5.5" fill="none" stroke="#666"/>`)}
            ${gap(5)}
            ${ic(8, 8, svg`<path d="M1 1 L7 7 M7 1 L1 7" stroke="#555" stroke-width="1.4"/>`)}
          </div>
        </div>

        <div class="ribbon">
          <div class="grp g-side">
            <div class="grp-body">
              <div class="rbtn on w40">
                ${ic(22, 27, svg`<rect x="1" y="1" width="20" height="26" fill="#9a9a9a"/><rect x="1" y="1" width="20" height="6" fill="#5b8ed6"/>${[0, 1, 2].map((r) => [0, 1, 2].map((c) => svg`<rect x=${3.5 + c * 5.5} y=${10 + r * 5.5} width="4" height="4" fill="#fff"/>`))}`)}
                <span>Libraries</span>
              </div>
              <div class="rbtn w35">
                ${ic(26, 27, svg`<path d="M8 1 H25 L18 8 H1 Z" fill="#2bb52b"/><path d="M7 9 H24 L18 17 H1 Z" fill="#2258cc"/><path d="M7 19 H24 L18 26 H1 Z" fill="#a674cc"/>`)}
                <span>Layers</span>
              </div>
              <div class="rbtn w34">
                ${ic(25, 27, svg`<circle cx="12.5" cy="13.5" r="11.5" fill="#0f8fdc"/><circle cx="12.5" cy="7.5" r="2" fill="#fff"/><path d="M10 11 H14.5 V19 H16 V21 H10 V19 H11.5 V13 H10 Z" fill="#fff"/>`)}
                <span>Info</span>
              </div>
            </div>
            <div class="grp-lb">Side Panels</div>
          </div>

          <div class="grp g-view">
            <div class="grp-body">
              <div class="checks">
                ${['Rulers', 'Page Breaks', 'Grid', 'Shape Sizes', 'Guides'].map(
                  (t) => html`<div class="chk">
                    <div class="cb">${ic(9, 9, svg`<path d="M1.5 4.5 L3.8 7 L7.8 1.5" fill="none" stroke="#777" stroke-width="1.2"/>`)}</div>
                    ${t}
                  </div>`
                )}
              </div>
            </div>
            <div class="grp-lb">View</div>
          </div>

          <div class="grp g-zoom">
            <div class="grp-body">
              <div class="zoom-col">
                <div class="zoom-ic">
                  ${ic(13, 14, svg`<circle cx="5.5" cy="5.5" r="4.5" fill="#d8ecfa" stroke="#1a6cb8" stroke-width="1.3"/><path d="M9 9 L13 13" stroke="#1a4a88" stroke-width="2"/><path d="M3 5.5 H8 M5.5 3 V8" stroke="#1a6cb8"/>`)}
                  ${ic(13, 14, svg`<circle cx="5.5" cy="5.5" r="4.5" fill="#d8ecfa" stroke="#1a6cb8" stroke-width="1.3"/><path d="M9 9 L13 13" stroke="#1a4a88" stroke-width="2"/><path d="M3 5.5 H8" stroke="#1a6cb8"/>`)}
                  <div class="zoom-sep"></div>
                  ${ic(13, 14, svg`<rect x="0.5" y="1" width="12" height="12" fill="none" stroke="#22b83c" stroke-dasharray="2 1"/><ellipse cx="6.5" cy="7" rx="4" ry="5" fill="#6fa8e0"/>`)}
                  ${ic(14, 14, svg`<rect x="0.5" y="0.5" width="5" height="5" fill="none" stroke="#2f86c0"/><rect x="8" y="0.5" width="5" height="5" fill="none" stroke="#2f86c0"/><rect x="0.5" y="8" width="5" height="5" fill="none" stroke="#2f86c0"/><circle cx="9" cy="9" r="3" fill="#fff" stroke="#1a6cb8"/><path d="M11 11 L14 14" stroke="#1a4a88" stroke-width="1.5"/>`)}
                  ${ic(14, 14, svg`<rect x="0.5" y="0.5" width="11" height="11" fill="none" stroke="#22b83c" stroke-dasharray="2 1"/><circle cx="8" cy="8" r="3" fill="#fff" stroke="#1a6cb8"/><path d="M10 10 L14 14" stroke="#1a4a88" stroke-width="1.5"/>`)}
                  <div class="zoom-sep"></div>
                  ${ic(12, 14, svg`<path d="M3 7 V3 M5 6 V1.5 M7 6 V1.5 M9 7 V3 M3 7 L1 6 L3 11 C4 13 9 13 10 10 L10 5" fill="none" stroke="#3b86c8" stroke-width="1.2"/>`)}
                </div>
                <div class="zoom-row">
                  <span class="zoom-lb">Zoom</span>
                  <div class="select zoom-sel">292%<div class="caret"></div></div>
                </div>
              </div>
            </div>
            <div class="grp-lb">Zoom</div>
          </div>

          <div class="grp g-win">
            <div class="grp-body">
              <div class="win-btn w41">
                ${ic(20, 24, svg`<rect width="20" height="24" fill="#a8a8a8"/><rect width="20" height="4" fill="#1c5fb0"/><path d="M3 8 H17 M3 13 H17 M3 18 H17" stroke="#fff"/><rect x="6" y="6.5" width="3" height="3" fill="#fff" stroke="#777"/><rect x="9" y="11.5" width="3" height="3" fill="#fff" stroke="#777"/><rect x="6" y="16.5" width="3" height="3" fill="#fff" stroke="#777"/>`)}
                <span>Panels</span>
                <div class="caret"></div>
              </div>
              <div class="sep"></div>
              <div class="win-btn tall w46">
                ${ic(22, 22, svg`<rect x="7" y="1" width="14" height="16" fill="#e4eef4" stroke="#8aa4b4"/><rect x="4" y="3" width="14" height="16" fill="#eef4f8" stroke="#8aa4b4"/><rect x="1" y="6" width="14" height="15" fill="#cfe0ea" stroke="#7a96a8"/><rect x="1" y="6" width="14" height="3" fill="#8ab0c8"/><rect x="4" y="11" width="8" height="10" fill="#fff"/>`)}
                <span>Window</span>
                <div class="caret"></div>
              </div>
            </div>
            <div class="grp-lb">Windows &amp; Panels</div>
          </div>
        </div>

        <div class="body">
          <div class="p-sol">
            <div class="hdr"><span>Solutions</span><span class="sp"></span>${pin('#fff')}${close('#fff')}</div>
            <div class="sol-tabs"><div class="on">Solutions</div><div>Pages</div><div>Layers</div></div>
            <div class="sol-search">
              <div class="sol-input"></div>
              ${ic(13, 11, svg`<path d="M2 3 L12 1 M1 5 L12 3.5" stroke="#d8342a" stroke-width="1.2"/><path d="M1 7 L12 5.5" stroke="#2bb52b" stroke-width="1.2"/><path d="M1 9 L12 7.5" stroke="#2258cc" stroke-width="1.2"/>`)}
            </div>
            <div class="sol-main">
              <div class="tree">
                <div class="root"><div class="arr d"></div><div>Cross-Functional<br />Flowcharts</div></div>
                <div class="node"><div class="arr r"></div>Libraries</div>
                <div class="node"><div class="arr r"></div>Templates</div>
                <div class="node open"><div class="arr d"></div>Samples</div>
                <div class="samples">
                  ${samples.map(
                    (s) => html`<div class="sample">
                      <div class="thumb-box"><svg width=${s.w} height=${s.h} viewBox=${s.vb}>${s.body}</svg></div>
                      <div class="sample-lb">${s.label.map((l) => html`<div>${l}</div>`)}</div>
                    </div>`
                  )}
                </div>
              </div>
              ${sb(173, 88)}
            </div>
          </div>

          <div class="p-lib">
            <div class="hdr"><span class="title-o">Library</span><span class="sp"></span>${pin('#555')}${close('#555')}</div>
            <div class="lib-nav">
              ${ic(9, 12, svg`<path d="M6.5 2 L2.5 6 L6.5 10" fill="none" stroke="#1a5ea8" stroke-width="1.6"/>`)}
              ${ic(9, 12, svg`<path d="M2.5 2 L6.5 6 L2.5 10" fill="none" stroke="#444" stroke-width="1.6"/>`)}
              <div class="select lib-sel">Cross-functi...<div class="caret"></div></div>
            </div>
            <div class="lib-main">
              <div class="lib-list">
                ${lib.map(
                  (i) => html`<div class="lib-item">
                    <svg width="52" height="51" viewBox="0 0 52 51">${i.s}</svg>
                    <div>${i.lb.map((l) => html`<div>${l}</div>`)}</div>
                  </div>`
                )}
              </div>
              ${sb(0, 268)}
            </div>
          </div>

          <div class="center">
            <div class="work">
              <div class="corner">in</div>
              <svg class="ruler" width="914" height="13" viewBox="305 124 914 13">
                ${topRuler()}<line x1="305" x2="1219" y1="136.5" y2="136.5" stroke="#222"/>
                <line x1="318.5" x2="318.5" y1="124" y2="137" stroke="#f03030"/>
              </svg>
              <div class="vscroll">
                <div class="vt"><div class="vth"></div></div>
                ${ic(11, 12, svg`<path d="M2.5 4 H8.5 L5.5 8 Z" fill="#555"/>`)}
              </div>
              <svg class="ruler" width="14" height="676" viewBox="291 137 14 676">
                ${leftRuler()}<line x1="304.5" x2="304.5" y1="137" y2="813" stroke="#222"/>
                <line x1="291" x2="305" y1="154.5" y2="154.5" stroke="#f03030"/>
              </svg>
              <svg width="914" height="676" viewBox="305 137 914 676">${diagram()}</svg>
            </div>
            <div class="hbar">
              ${ic(7, 10, svg`<path d="M5 2 L2 5 L5 8" fill="none" stroke="#aaa"/>`)}
              <div class="pg-sel"><span>Credit approval proces... (1/1)</span><div class="caret"></div></div>
              ${ic(7, 10, svg`<path d="M2 2 L5 5 L2 8" fill="none" stroke="#aaa"/>`)}
              ${gap(2)}
              <div class="pg-btn">${ic(6, 8, svg`<path d="M5 0 L0.5 4 L5 8 Z" fill="#666"/>`)}</div>
              <div class="hthumb"></div>
              ${gap(399)}
              <div class="pg-btn">${ic(6, 8, svg`<path d="M1 0 L5.5 4 L1 8 Z" fill="#666"/>`)}</div>
              ${ic(12, 12, svg`<rect x="1" y="1" width="10" height="10" fill="#dce8f2" stroke="#7aa0c0" stroke-dasharray="2 1"/><rect x="4" y="3" width="4" height="6" fill="#fff" stroke="#7aa0c0"/>`)}
            </div>
            <div class="colors">
              <div class="hdr"><span class="title-o">Colors</span><span class="sp"></span>${pin('#555')}${gap(1)}${close('#555')}</div>
              <div class="pal">
                <div class="pal-ic">${ic(16, 10, svg`<path d="M2 8 C2 3 7 0 9 2 L8 8 Z" fill="#2f68c0"/><rect x="12" y="1" width="2" height="2" fill="#d8342a"/><rect x="12" y="4" width="2" height="2" fill="#22a83c"/><rect x="12" y="7" width="2" height="2" fill="#2258cc"/>`)}</div>
                ${colors.map((c) => html`<div class="sw" style="background:${c}"></div>`)}
              </div>
              <div class="pal2">${['#808080', '#585858', '#282828', '#000000'].map((c) => html`<div style="background:${c}"></div>`)}</div>
            </div>
          </div>

          <div class="p-arr">
            <div class="arr-in">
              <div class="arr-hd"><span class="title-o">Arrange &amp; Size</span><span class="sp"></span>${pin('#555')}${gap(3)}${close('#555')}</div>
              <div class="sec s-order">
                <div class="sec-h">${tri}Order<i></i></div>
                <div class="tools">
                  ${tool('back', 'Back')}${tool('front', 'Front')}${tool('backward', 'Backward')}${tool('forward', 'Forward')}
                </div>
              </div>
              <div class="sec s-align">
                <div class="sec-h">${tri}Align and Distribute<i></i></div>
                <div class="tools">
                  ${tool('left', 'Left')}${tool('center', 'Center')}${tool('right', 'Right')}${gap(2)}${tool('top', 'Top', 17)}${tool('middle', 'Middle', 18)}${tool('bot', 'Bottom')}
                </div>
                <div class="drops">
                  <div class="drop h">${ic(14, 12, svg`<rect x="1.5" y="1.5" width="4" height="9" fill="#fff" stroke=${BL}/><path d="M7 0 V12" stroke=${RD}/><rect x="9.5" y="2.5" width="3" height="7" fill="#fff" stroke="#8cbcd8"/>`)}Horizontal<div class="bar"></div><div class="caret"></div></div>
                  <div class="drop v">${ic(16, 13, svg`<rect x="4.5" y="0.5" width="7" height="4" fill="#fff" stroke=${BL}/><path d="M0 6.5 H16" stroke=${RD}/><rect x="5.5" y="8.5" width="5" height="3" fill="#fff" stroke="#8cbcd8"/>`)}${gap(2)}Vertical<div class="bar"></div></div>
                </div>
              </div>
              <div class="sec s-size">
                <div class="sec-h">${tri}Size<i></i></div>
                <div class="num"><label>Width</label><div class="inp">1.20 in</div>${spin}
                  <div class="lock"><div class="cb"></div>Lock Proportions</div>
                </div>
                ${numRow('Height', '0.80 in')}
              </div>
              <div class="sec s-pos">
                <div class="sec-h">${tri}Position<i></i></div>
                ${numRow('X', '1.60 in')}${numRow('Y', '1.40 in')}
              </div>
              <div class="sec s-rot">
                <div class="sec-h">${tri}Rotate and Flip<i></i></div>
                ${numRow('Angle', '')}
                <div class="pinrow"><label>Pin</label><div class="select pinsel">Center-Center<div class="caret"></div></div></div>
                <div class="tools">
                  ${tool('cw', '90° CW', 16, 16, 0.9)}${tool('ccw', '90° CCW', 16, 16, 0.9)}${tool('r180', '180 °', 16, 16, 0.9)}${tool('', 'Flip')}${tool('vert', 'Vertical', 16, 16, 0.9)}${tool('horiz', 'Horizontal', 16, 16, 0.9, 'lb-shift')}
                </div>
              </div>
              <div class="sec s-grp">
                <div class="sec-h">${tri}Group and Lock<i></i></div>
                <div class="tools">
                  ${tool('group', 'Group', 16, 16, 0.9)}${tool('ungroup', 'UnGroup', 16, 16, 0.9)}
                  <div class="tool">
                    <div class="tool-ic">${ic(14, 14, ICONS.editgroup)}</div>
                    <div class="tool-lb lb-tight">Edit<br />Group</div>
                  </div>
                  ${tool('lock', 'Lock', 14, 16)}${tool('unlock', 'UnLock', 18, 18, 1)}
                </div>
              </div>
              <div class="sec s-make">
                <div class="sec-h">${tri}Make Same<i></i></div>
                <div class="tools">${tool('msize', 'Size')}${tool('mwidth', 'Width')}${tool('mheight', 'Height')}</div>
              </div>
            </div>
          </div>
          <div class="tabs-v">
            <div class="t1">Format</div>
            <div class="t2">Hypernote</div>
            <div class="t3">Presentation</div>
            <div>Custom Properties</div>
          </div>
        </div>
      </div>

      <div class="status">
        <span class="st-ready">Ready</span>
        <span class="st-mouse">Mouse: [ 0.91, 0.15 ] in</span>
        <span class="st-size">Width: 1.20 in;&nbsp; Height: 0.80 in;&nbsp; Angle: 0.00°</span>
        <span class="st-id">ID: 504112</span>
        <div class="st-r">
          ${ic(11, 12, svg`<path d="M3 7 V3 M5 6 V1.5 M7 6 V1.5 M9 7 V3 M3 7 L1 6 L3 11 C4 13 9 13 10 10 L10 5 Z" fill="#fff" stroke="#fff" stroke-width="1.1"/>`)}
          ${gap(3)}
          ${ic(11, 12, svg`<rect x="0.5" y="0.5" width="7" height="7" fill="none" stroke="#fff" stroke-dasharray="1 1"/><circle cx="6" cy="7" r="2.4" fill="none" stroke="#fff"/><path d="M8 9 L10.5 11.5" stroke="#fff"/>`)}
          ${gap(1)}
          ${ic(11, 12, svg`<rect x="1" y="0.5" width="9" height="11" fill="none" stroke="#fff" stroke-dasharray="1 1"/><rect x="3" y="3" width="5" height="6" fill="#f2b8a4"/>`)}
          ${gap(0)}
          ${ic(5, 2, svg`<rect width="5" height="1.6" fill="#fff"/>`)}
          <div class="slider"><i></i></div>
          ${ic(7, 7, svg`<path d="M0 3.5 H7 M3.5 0 V7" stroke="#fff" stroke-width="1.2"/>`)}
          <span class="st-pct">292%</span>
        </div>
      </div>
    `;
  }
}
